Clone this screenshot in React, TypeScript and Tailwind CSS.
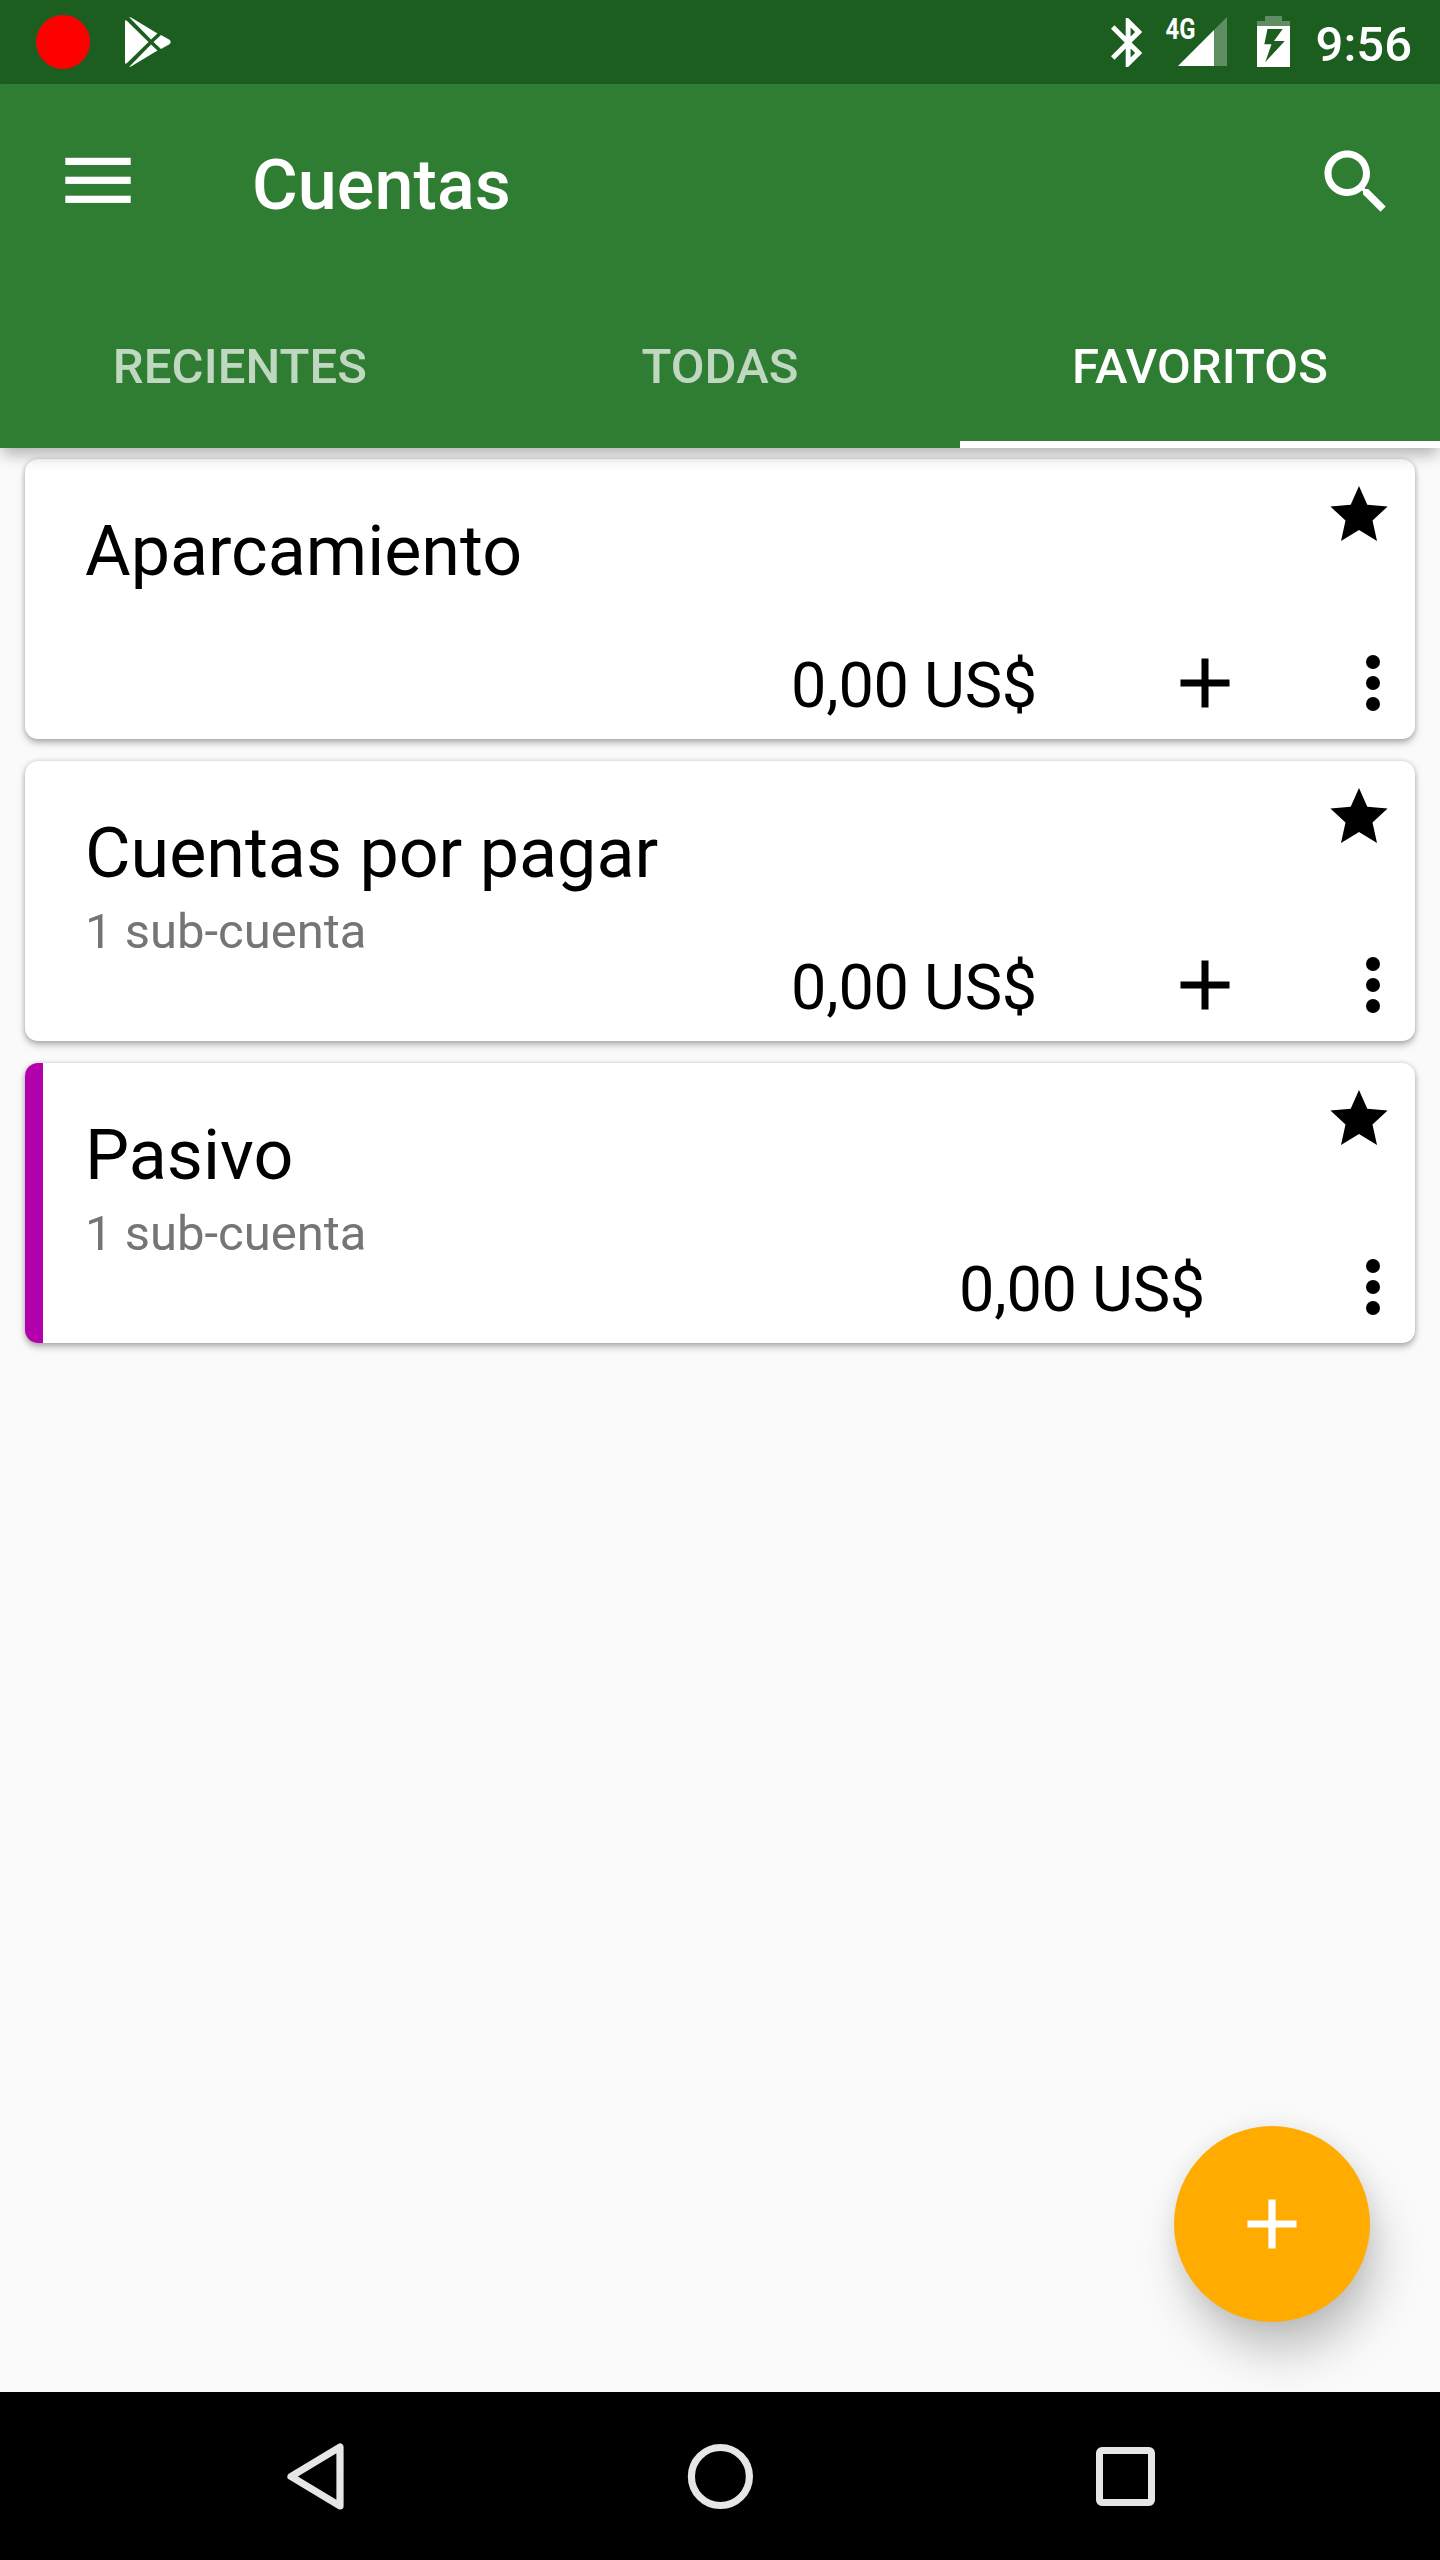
import React from "react";

type Account = { name: string; sub?: string; balance: string; canAdd: boolean; accent?: boolean };

const accounts: Account[] = [
  { name: "Aparcamiento", balance: "0,00 US$", canAdd: true },
  { name: "Cuentas por pagar", sub: "1 sub-cuenta", balance: "0,00 US$", canAdd: true },
  { name: "Pasivo", sub: "1 sub-cuenta", balance: "0,00 US$", canAdd: false, accent: true },
];

const tabs = ["RECIENTES", "TODAS", "FAVORITOS"];

function StatusBar() {
  return (
    <div className="flex h-[84px] items-center justify-between bg-[#1b5e20] pr-[28px] pl-9">
      <div className="flex h-full items-center">
        <span className="size-[54px] rounded-full bg-[#ff0000]" />
        <svg className="ml-[35px] h-[84px] w-[46px]" viewBox="125 0 46 84" fill="#fff">
          <path d="M125 20.5 L126.5 20.5 L148.5 42 L126.5 63.5 L125 63.5Z" />
          <path d="M129 17 L131 17.5 L157.5 33.5 L151 39.5Z" />
          <path d="M129 67 L131 66.5 L157.5 50.5 L151 44.5Z" />
          <path d="M161 35 L169 39.5 Q172.5 42 169 44.5 L161 49 L153.5 42Z" />
        </svg>
      </div>
      <div className="flex h-full items-center">
        <svg className="h-[84px] w-[31px]" viewBox="0 0 31 84" fill="#fff">
          <path
            transform="translate(-12.25 13.1) scale(2.45)"
            d="M17.71 7.71L12 2h-1v7.59L6.41 5 5 6.41 10.59 12 5 17.59 6.41 19 11 14.41V22h1l5.71-5.71-4.3-4.29 4.3-4.29zM13 5.83l1.88 1.88L13 9.59V5.83zm1.88 10.46L13 18.17v-3.76l1.88 1.88z"
          />
        </svg>
        <svg className="ml-[23px] h-[84px] w-[62px]" viewBox="1165 0 62 84" fill="#fff">
          <text
            x="1165.5"
            y="39"
            textLength="30"
            lengthAdjust="spacingAndGlyphs"
            className="font-['Roboto'] text-[29px] font-bold"
          >
            4G
          </text>
          <path d="M1178 66 L1214 30 V66Z" />
          <path d="M1214 30 L1227 17 V66 H1214Z" fillOpacity="0.3" />
        </svg>
        <svg className="ml-[30px] h-[84px] w-[33px]" viewBox="1257 0 33 84" fill="#fff">
          <path d="M1265 16 H1282 V21 H1290 V26 H1257 V21 H1265Z" fillOpacity="0.3" />
          <path
            fillRule="evenodd"
            d="M1257 26 H1290 V67 H1257Z M1267.5 29 L1264.3 44.3 H1271.5 L1265.3 62 L1284.8 41 H1274 L1282.7 29Z"
          />
        </svg>
        <span className="mt-[5px] ml-[26px] text-[49px] leading-[60px] font-medium text-white">9:56</span>
      </div>
    </div>
  );
}

function Star() {
  return (
    <svg className="mt-[27px] mr-[27px] h-[56px] w-[58px]" viewBox="-29 0 58 56">
      <path d="M0 0 L8.3 18.8 L28.6 20.6 L13.5 34.4 L18 55 L0 44 L-18 55 L-13.5 34.4 L-28.6 20.6 L-8.3 18.8Z" />
    </svg>
  );
}

function AccountCard({ name, sub, balance, canAdd, accent }: Account) {
  return (
    <div className="flex h-[280px] overflow-hidden rounded-[13px] bg-white shadow-[0_4px_7px_rgba(0,0,0,0.28),0_0_4px_rgba(0,0,0,0.16)]">
      <div className={accent ? "w-[18px] bg-[#b300ad]" : "w-[18px]"} />
      <div className="flex flex-1 flex-col pt-[50px] pl-[42px]">
        <span className="text-[70px] leading-[84px] whitespace-nowrap text-black">{name}</span>
        {sub && <span className="mt-[7px] text-[49px] leading-[60px] text-[#757575]">{sub}</span>}
      </div>
      <div className="flex flex-col items-end justify-between">
        <Star />
        <div className="mr-[35px] mb-[14px] flex h-[84px] items-center">
          <span className="mt-[5px] text-[63px] leading-[74px] tracking-[-0.25px] text-black">{balance}</span>
          {canAdd && (
            <svg className="ml-[143px] h-[50px] w-[50px]" viewBox="0 0 50 50">
              <path d="M21.5 0.5 h7 v21 h21 v7 h-21 v21 h-7 v-21 h-21 v-7 h21Z" />
            </svg>
          )}
          <svg className={canAdd ? "ml-[136px] h-[56px] w-[14px]" : "ml-[161px] h-[56px] w-[14px]"} viewBox="0 0 14 56">
            <circle cx="7" cy="7" r="7" />
            <circle cx="7" cy="28" r="7" />
            <circle cx="7" cy="49" r="7" />
          </svg>
        </div>
      </div>
    </div>
  );
}

export default function App() {
  return (
    <div className="relative flex h-[2560px] w-[1440px] flex-col overflow-hidden bg-[#fafafa] font-['Roboto',sans-serif]">
      <StatusBar />
      <header className="relative z-10 h-[364px] bg-[#2e7d32] text-white shadow-[0_9px_14px_-2px_rgba(0,0,0,0.28)]">
        <div className="flex h-[196px] items-center pr-[42px] pl-[65px]">
          <svg className="h-[84px] w-[66px]" viewBox="0 0 66 84" fill="#fff">
            <rect x="0.3" y="17.8" width="65.4" height="7.2" />
            <rect x="0.3" y="36.7" width="65.4" height="7.2" />
            <rect x="0.3" y="55.7" width="65.4" height="7.2" />
          </svg>
          <span className="mt-[6px] ml-[121px] flex-1 text-[70px] leading-[84px] font-medium tracking-[0.1px]">Cuentas</span>
          <svg className="size-[84px]" viewBox="0 0 24 24" fill="#fff">
            <path d="M15.5 14h-.79l-.28-.27C15.41 12.59 16 11.11 16 9.5 16 5.91 13.09 3 9.5 3S3 5.91 3 9.5 5.91 16 9.5 16c1.61 0 3.09-.59 4.23-1.57l.27.28v.79l5 4.99L20.49 19l-4.99-5zm-6 0C7.01 14 5 11.99 5 9.5S7.01 5 9.5 5 14 7.01 14 9.5 11.99 14 9.5 14z" />
          </svg>
        </div>
        <nav className="grid h-[168px] grid-cols-3">
          {tabs.map((tab, i) => (
            <div
              key={tab}
              className={
                i === 2
                  ? "flex items-center justify-center border-b-[7px] border-white pt-[12px]"
                  : "flex items-center justify-center pt-[5px] text-white/70"
              }
            >
              <span className="text-[49px] leading-[60px] font-medium tracking-[0.1px]">{tab}</span>
            </div>
          ))}
        </nav>
      </header>
      <main className="flex flex-1 flex-col gap-[22px] px-[25px] pt-[11px]">
        {accounts.map((a) => (
          <AccountCard key={a.name} {...a} />
        ))}
      </main>
      <button className="absolute right-[70px] bottom-[238px] flex size-[196px] items-center justify-center rounded-full bg-[#ffab00] shadow-[9px_32px_48px_-4px_rgba(0,0,0,0.24),0_0_24px_rgba(0,0,0,0.07)]">
        <svg className="size-[50px]" viewBox="0 0 50 50" fill="#fff">
          <path d="M21.4 0.4 h7.2 v21 h21 v7.2 h-21 v21 h-7.2 v-21 h-21 v-7.2 h21Z" />
        </svg>
      </button>
      <footer className="relative z-10 flex h-[168px] items-center bg-black pl-[286px]">
        <svg className="h-[70px] w-[60px]" viewBox="0 0 60 70" fill="none" stroke="#e6e6e6" strokeWidth="7.2" strokeLinejoin="round">
          <path d="M5 35.5 L54 6 V65Z" />
        </svg>
        <svg className="ml-[340px] size-[70px]" viewBox="0 0 70 70" fill="none" stroke="#e6e6e6" strokeWidth="7.2">
          <circle cx="34.4" cy="35.5" r="29" />
        </svg>
        <span className="ml-[340px] size-[59px] rounded-[6px] border-[7px] border-[#e6e6e6]" />
      </footer>
    </div>
  );
}
